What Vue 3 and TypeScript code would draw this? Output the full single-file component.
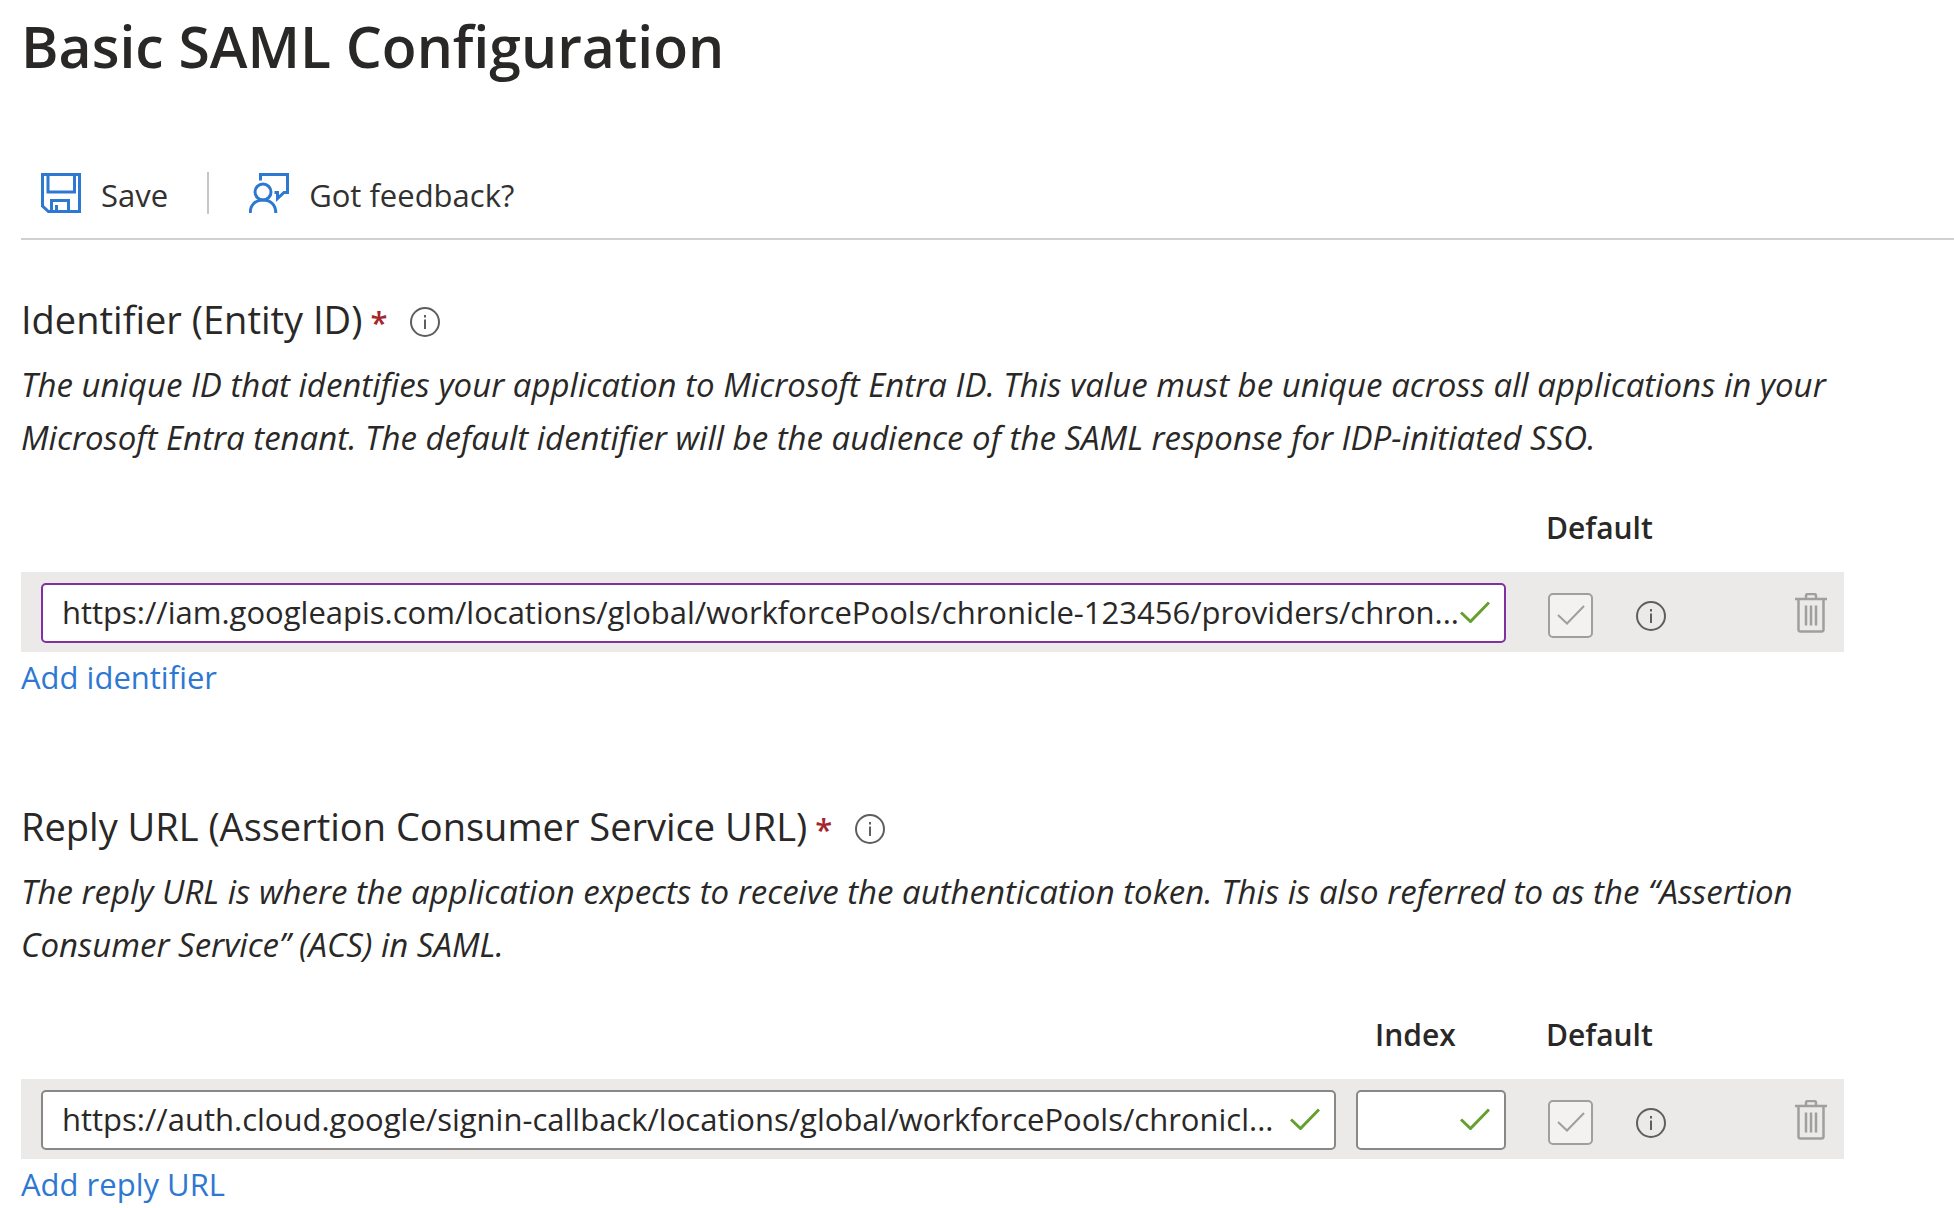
<script setup lang="ts">
import { ref } from 'vue'

interface Section {
  id: string
  title: string
  description: string
  url: string
  active: boolean
  hasIndex: boolean
  addLabel: string
}

const sections = ref<Section[]>([
  {
    id: 'identifier',
    title: 'Identifier (Entity ID)',
    description:
      'The unique ID that identifies your application to Microsoft Entra ID. This value must be unique across all applications in your Microsoft Entra tenant. The default identifier will be the audience of the SAML response for IDP-initiated SSO.',
    url: 'https://iam.googleapis.com/locations/global/workforcePools/chronicle-123456/providers/chron...',
    active: true,
    hasIndex: false,
    addLabel: 'Add identifier',
  },
  {
    id: 'reply',
    title: 'Reply URL (Assertion Consumer Service URL)',
    description:
      'The reply URL is where the application expects to receive the authentication token. This is also referred to as the “Assertion Consumer Service” (ACS) in SAML.',
    url: 'https://auth.cloud.google/signin-callback/locations/global/workforcePools/chronicl...',
    active: false,
    hasIndex: true,
    addLabel: 'Add reply URL',
  },
])
</script>

<template>
  <main class="page">
    <h1 class="title">Basic SAML Configuration</h1>

    <div class="toolbar" role="toolbar" aria-label="Commands">
      <button class="command" type="button">
        <svg class="command-icon" viewBox="0 0 40 40" aria-hidden="true">
          <path d="M1.500 1.500h37v37H7.500L1.500 33z M7 1.500v17.500h26.500V1.500 M10.500 38V27.500h17V38 M15.500 32v6" />
        </svg>
        <span class="command-text">Save</span>
      </button>
      <span class="divider"></span>
      <button class="command" type="button">
        <svg class="command-icon" viewBox="0 0 40 40" aria-hidden="true">
          <path d="M11.500 7.500V1.500h27v18h-3.500l-6.500 6v-6h-3" />
          <circle cx="14" cy="19" r="8" />
          <path d="M1.200 40c0-7.800 5-13 12.800-13s12.800 5.200 12.800 13" />
        </svg>
        <span class="command-text">Got feedback?</span>
      </button>
    </div>

    <section v-for="s in sections" :key="s.id" class="section">
      <h2 class="heading">
        <span>{{ s.title }}<span class="required">*</span></span>
        <svg class="info" viewBox="0 0 30 30" role="img" aria-label="Info">
          <circle cx="15" cy="15" r="14" />
          <path d="M15 12.500v9.500 M15 8v2.500" />
        </svg>
      </h2>
      <p class="description">{{ s.description }}</p>

      <div class="labels">
        <div class="fields">
          <span class="url-field"></span>
          <label v-if="s.hasIndex" class="index-label" :for="s.id + '-index'">Index</label>
        </div>
        <div class="tail">
          <label :for="s.id + '-default'">Default</label>
        </div>
      </div>

      <div class="row">
        <div class="fields">
          <div class="box url-field">
            <input v-model="s.url" class="input" :class="{ active: s.active }" type="text" :aria-label="s.title" />
            <svg class="valid" viewBox="0 0 30 22" aria-hidden="true"><path d="M1 11.500l9.500 9L29 1.500" /></svg>
          </div>
          <div v-if="s.hasIndex" class="box index-field">
            <input :id="s.id + '-index'" class="input" type="text" />
            <svg class="valid" viewBox="0 0 30 22" aria-hidden="true"><path d="M1 11.500l9.500 9L29 1.500" /></svg>
          </div>
        </div>
        <div class="tail">
          <div class="default">
            <span class="check">
              <input :id="s.id + '-default'" class="checkbox" type="checkbox" checked disabled />
              <svg class="tick" viewBox="0 0 28 20" aria-hidden="true"><path d="M1 10l9 8.500L27 1" /></svg>
            </span>
            <svg class="info" viewBox="0 0 30 30" role="img" aria-label="Info">
              <circle cx="15" cy="15" r="14" />
              <path d="M15 12.500v9.500 M15 8v2.500" />
            </svg>
          </div>
          <button class="delete" type="button" aria-label="Delete" disabled>
            <svg viewBox="0 0 32 40" aria-hidden="true">
              <path d="M0 6h32 M11 6V3q0-2 2-2h6q2 0 2 2v3 M3.500 6v30.500q0 2 2 2h21q2 0 2-2V6 M11 12.500v20 M16 12.500v20 M21 12.500v20" />
            </svg>
          </button>
        </div>
      </div>

      <a class="add" href="#">{{ s.addLabel }}</a>
    </section>
  </main>
</template>

<style>
body {
  margin: 0;
  background: #fff;
}
</style>

<style scoped>
.page {
  padding: 8px 0 0 21px;
  color: #292827;
  font-family: "Open Sans", "Noto Sans", sans-serif;
  font-size: 31px;
  line-height: 42px;
}

.title {
  margin: 0;
  font-size: 57px;
  font-weight: 600;
  line-height: 76px;
}

.toolbar {
  display: flex;
  align-items: center;
  height: 44px;
  margin-top: 87px;
  padding: 0 0 23px 20px;
  border-bottom: 2px solid #d2d0ce;
}

.command {
  display: flex;
  align-items: center;
  gap: 20px;
  padding: 0;
  border: 0;
  background: none;
  color: #323130;
  font: inherit;
}

.command-icon {
  width: 40px;
  height: 40px;
  fill: none;
  stroke: #2e78d2;
  stroke-width: 3;
}

.command-text {
  padding-top: 4px;
}

.divider {
  width: 2px;
  height: 42px;
  margin: 0 40px 0 39px;
  background: #c8c6c4;
}

.section {
  margin: 53px 110px 0 0;
}

.section + .section {
  margin-top: 102px;
}

.heading {
  display: flex;
  align-items: center;
  gap: 23px;
  margin: 0;
  font-size: 38px;
  font-weight: 400;
  line-height: 52px;
}

.required {
  margin-left: 8px;
  color: #a4262c;
  font-size: 31px;
  font-weight: 600;
  line-height: 42px;
}

.info {
  width: 30px;
  height: 30px;
  fill: none;
  stroke: #605e5c;
  stroke-width: 2;
}

.heading .info {
  margin-top: 6px;
}

.description {
  margin: 13px 0 0;
  font-size: 33px;
  font-style: italic;
  line-height: 53px;
}

.labels {
  display: flex;
  min-height: 42px;
  margin: 43px 0 23px;
  padding-left: 20px;
  font-size: 30px;
  font-weight: 600;
}

.row {
  display: flex;
  align-items: center;
  padding: 11px 0 9px 20px;
  background: #ebeae8;
}

.fields {
  display: flex;
  flex: 1;
  gap: 20px;
  min-width: 0;
}

.url-field {
  flex: 1;
  min-width: 0;
}

.index-field {
  width: 150px;
}

.index-label {
  box-sizing: border-box;
  width: 150px;
  padding-left: 19px;
}

.tail {
  box-sizing: border-box;
  display: flex;
  align-items: center;
  justify-content: space-between;
  width: 338px;
  padding: 0 17px 0 42px;
}

.labels .tail {
  padding-left: 40px;
}

.box {
  position: relative;
}

.input {
  box-sizing: border-box;
  display: block;
  width: 100%;
  height: 60px;
  padding: 0 42px 2px 19px;
  border: 2px solid #8a8886;
  border-radius: 5px;
  outline: none;
  background: #fff;
  color: #292827;
  font: inherit;
  text-overflow: ellipsis;
}

.input.active {
  border-color: #8030a0;
}

.valid {
  position: absolute;
  top: 18px;
  right: 16px;
  width: 30px;
  height: 22px;
  fill: none;
  stroke: #64a02c;
  stroke-width: 3;
}

.default {
  display: flex;
  align-items: center;
  gap: 43px;
  padding-top: 5px;
}

.check {
  position: relative;
  display: block;
  width: 45px;
  height: 45px;
}

.checkbox {
  appearance: none;
  box-sizing: border-box;
  display: block;
  width: 45px;
  height: 45px;
  margin: 0;
  border: 2px solid #a19f9d;
  border-radius: 5px;
  background: #f3f2f1;
}

.tick {
  position: absolute;
  top: 12px;
  left: 9px;
  width: 28px;
  height: 20px;
  fill: none;
  stroke: #a19f9d;
  stroke-width: 2;
}

.delete {
  padding: 0;
  border: 0;
  background: none;
}

.delete svg {
  display: block;
  width: 32px;
  height: 40px;
  fill: none;
  stroke: #a19f9d;
  stroke-width: 2.500;
}

.add {
  display: table;
  margin-top: 4px;
  color: #2e78d2;
  text-decoration: none;
}
</style>
